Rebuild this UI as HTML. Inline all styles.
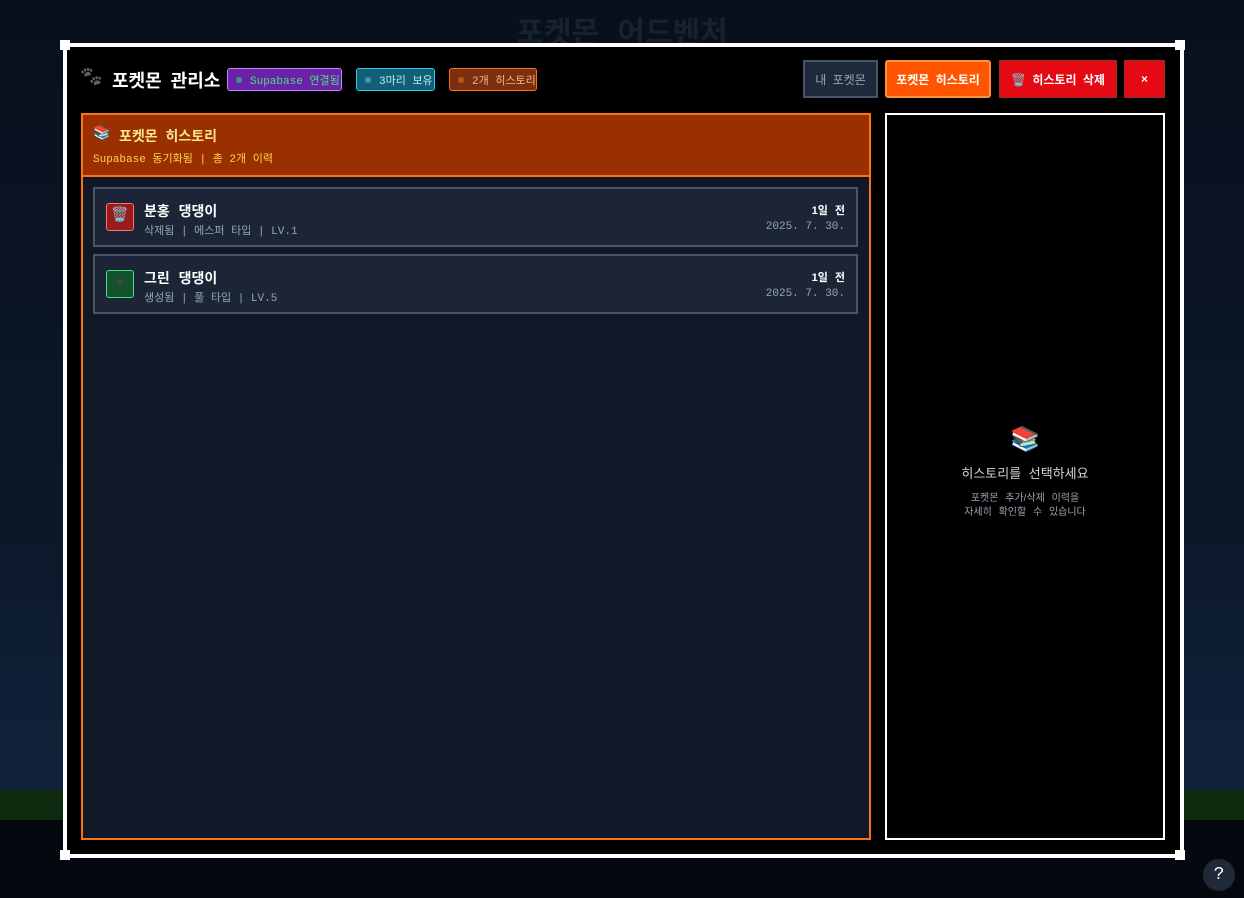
<!DOCTYPE html>
<html><head><meta charset="utf-8"><style>
*{box-sizing:border-box;margin:0;padding:0}
body{width:1244px;height:898px;overflow:hidden;background:#0b1422;font-family:"Liberation Mono","Noto Sans CJK KR",monospace;position:relative;color:#fff}
.bg{position:absolute;inset:0;background:linear-gradient(#08101c 0%,#0c182a 60%,#10223a 85%)}
.bgt{position:absolute;left:0;right:0;top:8px;text-align:center;font:bold 30px "Liberation Sans","Noto Sans CJK KR",sans-serif;color:#18212f;word-spacing:10px}
.gb{position:absolute;left:0;right:0;top:790px;height:30px;background:#0e2a0e}
.bb{position:absolute;left:0;right:0;top:820px;height:78px;background:#05080e}
.m{position:absolute;left:63px;top:43px;width:1121px;height:815px;border:4px solid #fff;background:#000}
.c{position:absolute;width:10px;height:10px;background:#fff}
.b{position:absolute;font-size:11px;border-radius:3px;height:23px;display:flex;align-items:center;padding-left:22px;white-space:nowrap}
.b i{position:absolute;left:8px;top:8px;width:6px;height:6px;border-radius:50%}
.btn{position:absolute;top:60px;height:38px;font:bold 12px "Liberation Sans","Noto Sans CJK KR",sans-serif;display:flex;align-items:center;justify-content:center;border:2px solid;word-spacing:3px}
.k{font-family:"Liberation Sans","Noto Sans CJK KR",sans-serif;word-spacing:4px}
.it{position:absolute;left:93px;width:765px;height:60px;background:#1c2535;border:2px solid #4b5563}
.ic{position:absolute;left:11px;top:14px;width:28px;height:28px;border-radius:3px;border:1.5px solid}
.nm{position:absolute;left:49px;top:12px;font:bold 14px "Liberation Sans","Noto Sans CJK KR",sans-serif;word-spacing:5px}
.sb{position:absolute;left:49px;top:33px;font-size:11px;color:#94a3b8}
.tm{position:absolute;right:11px;top:15px;text-align:right;font-size:11px;line-height:15px}
</style></head><body>
<div class="bg"></div><div class="bgt">포켓몬 어드벤처</div><div class="gb"></div><div class="bb"></div>
<div class="m"></div>
<div class="c" style="left:60px;top:40px"></div><div class="c" style="left:1175px;top:40px"></div>
<div class="c" style="left:60px;top:850px"></div><div class="c" style="left:1175px;top:850px"></div>
<div style="position:absolute;left:80px;top:66px;font-size:18px;color:#777;filter:grayscale(1)">🐾</div>
<div class="k" style="position:absolute;left:112px;top:67px;font-size:18px;font-weight:bold">포켓몬 관리소</div>
<div class="b" style="left:227px;top:68px;width:115px;background:#6b21a8;border:1px solid #c084fc;color:#4ade80"><i style="background:#3b9a8a"></i>Supabase 연결됨</div>
<div class="b" style="left:356px;top:68px;width:79px;background:#155e75;border:1px solid #22d3ee;color:#a5f3fc"><i style="background:#2aa2b8"></i>3마리 보유</div>
<div class="b" style="left:449px;top:68px;width:88px;background:#7c2d12;border:1px solid #f97316;color:#fdba74"><i style="background:#c2540a"></i>2개 히스토리</div>
<div class="btn" style="left:803px;width:75px;background:#1e293b;border-color:#475569;color:#94a3b8;font-weight:normal">내 포켓몬</div>
<div class="btn" style="left:885px;width:106px;background:#ff5500;border-color:#fb923c;border-radius:3px">포켓몬 히스토리</div>
<div class="btn" style="left:999px;width:118px;background:#e50914;border-color:#b91c1c">🗑️&nbsp;히스토리 삭제</div>
<div class="btn" style="left:1124px;width:41px;background:#e50914;border-color:#b91c1c">×</div>
<div style="position:absolute;left:81px;top:113px;width:790px;height:727px;border:2px solid #f97316;background:#111827"></div>
<div style="position:absolute;left:83px;top:115px;width:786px;height:62px;background:#9a3000;border-bottom:2px solid #f97316"></div>
<div style="position:absolute;left:93px;top:125px;font-size:14px">📚</div>
<div class="k" style="position:absolute;left:119px;top:126px;font-size:14px;font-weight:bold;color:#fde68a">포켓몬 히스토리</div>
<div style="position:absolute;left:93px;top:150px;font-size:11px;color:#fcd34d">Supabase 동기화됨 | 총 2개 이력</div>
<div class="it" style="top:187px"><div class="ic" style="background:#991b1b;border-color:#f87171;font-size:14px;text-align:center;line-height:25px">🗑️</div><div class="nm">분홍 댕댕이</div><div class="sb">삭제됨 | 에스퍼 타입 | LV.1</div><div class="tm"><b class="k">1일 전</b><br><span style="color:#94a3b8">2025. 7. 30.</span></div></div>
<div class="it" style="top:254px"><div class="ic" style="background:#14532d;border-color:#4ade80;color:#7a3a2a;text-align:center;line-height:25px;font-size:16px">+</div><div class="nm">그린 댕댕이</div><div class="sb">생성됨 | 풀 타입 | LV.5</div><div class="tm"><b class="k">1일 전</b><br><span style="color:#94a3b8">2025. 7. 30.</span></div></div>
<div style="position:absolute;left:885px;top:113px;width:280px;height:727px;border:2px solid #fff;background:#000;text-align:center">
<div style="margin-top:310px;font-size:24px">📚</div>
<div class="k" style="margin-top:8px;font-size:13px;color:#d1d5db">히스토리를 선택하세요</div>
<div class="k" style="margin-top:10px;font-size:10px;line-height:14px;color:#9ca3af">포켓몬 추가/삭제 이력을<br>자세히 확인할 수 있습니다</div>
</div>
<div style="position:absolute;left:1203px;top:859px;width:32px;height:32px;border-radius:50%;background:#1f2937;color:#fff;text-align:center;line-height:32px;font-size:18px">?</div>
</body></html>
